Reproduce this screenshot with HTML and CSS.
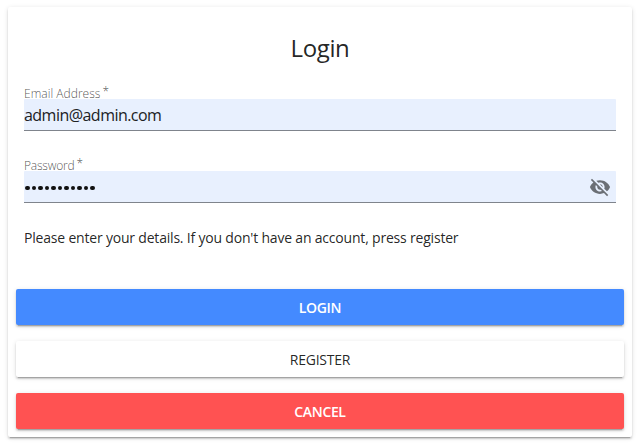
FILE: index.html
```html
<!DOCTYPE html>
<html lang="en">
<head>
<meta charset="utf-8">
<title>Login</title>
<link rel="stylesheet" href="styles.css">
</head>
<body>
<form class="card">
  <h1 class="title"><span>Login</span></h1>
  <div class="field">
    <label class="label" for="email"><span class="label-email">Email Address</span><span class="star">*</span></label>
    <div class="control"><input class="input" id="email" type="text" value="admin@admin.com"></div>
  </div>
  <div class="field">
    <label class="label" for="password"><span class="label-password">Password</span><span class="star">*</span></label>
    <div class="control">
      <div class="dots" id="password" role="img" aria-label="Password"><i></i><i></i><i></i><i></i><i></i><i></i><i></i><i></i><i></i><i></i><i></i></div>
      <svg class="eye" viewBox="0 0 24 24"><path d="M12 7c2.76 0 5 2.24 5 5 0 .65-.13 1.26-.36 1.83l2.92 2.92c1.51-1.26 2.7-2.89 3.43-4.75-1.73-4.39-6-7.5-11-7.5-1.4 0-2.74.25-3.98.7l2.16 2.16C10.74 7.13 11.35 7 12 7zM2 4.27l2.28 2.28.46.46C3.08 8.3 1.78 10.02 1 12c1.73 4.39 6 7.5 11 7.5 1.55 0 3.03-.3 4.38-.84l.42.42L19.73 22 21 20.73 3.27 3 2 4.27zM7.53 9.8l1.55 1.55c-.05.21-.08.43-.08.65 0 1.66 1.34 3 3 3 .22 0 .44-.03.65-.08l1.55 1.55c-.67.33-1.41.53-2.2.53-2.76 0-5-2.24-5-5 0-.79.2-1.53.53-2.2zm4.31-.78l3.15 3.15.02-.16c0-1.66-1.34-3-3-3l-.17.01z"/></svg>
    </div>
  </div>
  <p class="hint"><span>Please enter your details. If you don't have an account, press register</span></p>
  <div class="actions">
    <button class="button primary" type="button"><span>LOGIN</span></button>
    <button class="button plain" type="button"><span>REGISTER</span></button>
    <button class="button accent" type="button"><span>CANCEL</span></button>
  </div>
</form>
</body>
</html>
```
FILE: styles.css
```css
* { box-sizing: border-box; }
body {
  margin: 0;
  min-height: 448px;
  padding: 7px 9px 0 8px;
  background: #fff;
  color: rgba(0, 0, 0, .87);
  font-family: "Segoe UI", "Open Sans", "Noto Sans", sans-serif;
}
.card {
  height: 430px;
  padding: 0 8px;
  border-radius: 2px;
  background: #fff;
  box-shadow: 0 3px 1px -2px rgba(0,0,0,.2), 0 2px 2px 0 rgba(0,0,0,.14), 0 1px 5px 0 rgba(0,0,0,.12);
}
.title {
  margin: 0;
  padding-top: 25px;
  height: 78px;
  font-size: 24px;
  line-height: 32px;
  font-weight: 400;
  letter-spacing: -.4px;
  text-align: center;
}
.field { margin: 0 8px; height: 72px; }
.label {
  display: flex;
  height: 14px;
  font-size: 12px;
  line-height: 17px;
  font-weight: 300;
  color: rgba(0, 0, 0, .7);
}
.label-email { letter-spacing: .03px; }
.label-password { letter-spacing: -.2px; }
.star { margin-left: 2px; line-height: 13px; }
.control {
  display: flex;
  align-items: center;
  height: 32px;
  border-bottom: 1px solid #7f848c;
  background: #e8f0fe;
  border-radius: 1px 1px 0 0;
}
.input {
  flex: 1;
  height: 31px;
  padding: 0;
  border: 0;
  outline: 0;
  background: transparent;
  font: 400 16px "Segoe UI", "Open Sans", sans-serif;
  letter-spacing: -.53px;
  color: #202124;
}
.dots { display: flex; flex: 1; gap: 2px; padding: 3px 0 0 1px; }
.dots i { width: 4.5px; height: 4.5px; border-radius: 50%; background: #111; }
.eye { width: 22px; height: 22px; margin-right: 5px; fill: #6b6f75; }
.hint {
  margin: -1px 8px 0;
  height: 61px;
  font-size: 14px;
  line-height: 20px;
  letter-spacing: -.195px;
}
.actions { display: grid; gap: 16px; }
.button {
  height: 36px;
  padding: 0;
  border: 0;
  border-radius: 2px;
  font: 600 14px "Segoe UI", "Open Sans", sans-serif;
  letter-spacing: -.35px;
  box-shadow: 0 3px 1px -2px rgba(0,0,0,.2), 0 2px 2px 0 rgba(0,0,0,.14), 0 1px 5px 0 rgba(0,0,0,.12);
}
.primary { background: #448aff; color: #fff; }
.plain { background: #fff; color: rgba(0, 0, 0, .87); font-weight: 400; letter-spacing: -.25px; }
.accent { background: #ff5252; color: #fff; }
```
